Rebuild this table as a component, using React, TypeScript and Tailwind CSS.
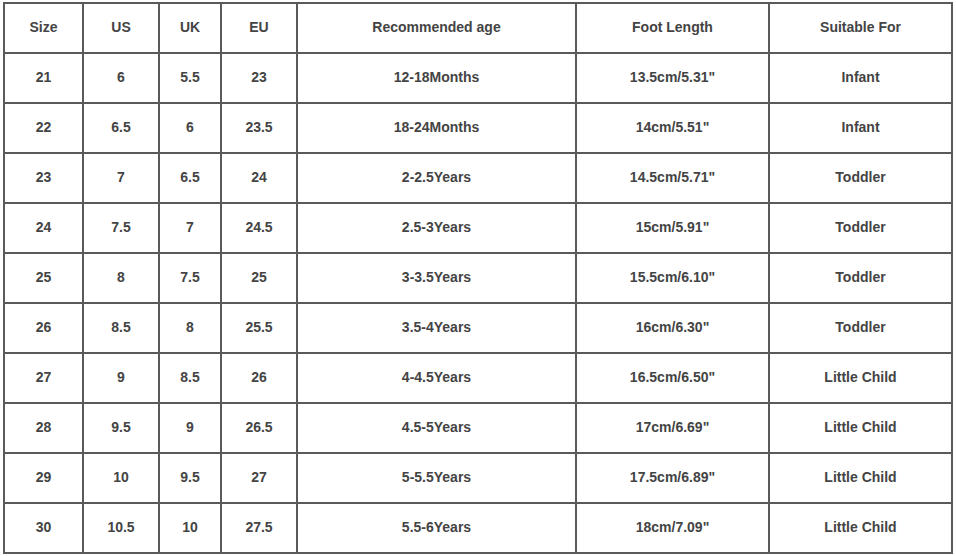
const headers = ['Size', 'US', 'UK', 'EU', 'Recommended age', 'Foot Length', 'Suitable For'];

const rows: string[][] = [
  ['21', '6', '5.5', '23', '12-18Months', '13.5cm/5.31"', 'Infant'],
  ['22', '6.5', '6', '23.5', '18-24Months', '14cm/5.51"', 'Infant'],
  ['23', '7', '6.5', '24', '2-2.5Years', '14.5cm/5.71"', 'Toddler'],
  ['24', '7.5', '7', '24.5', '2.5-3Years', '15cm/5.91"', 'Toddler'],
  ['25', '8', '7.5', '25', '3-3.5Years', '15.5cm/6.10"', 'Toddler'],
  ['26', '8.5', '8', '25.5', '3.5-4Years', '16cm/6.30"', 'Toddler'],
  ['27', '9', '8.5', '26', '4-4.5Years', '16.5cm/6.50"', 'Little Child'],
  ['28', '9.5', '9', '26.5', '4.5-5Years', '17cm/6.69"', 'Little Child'],
  ['29', '10', '9.5', '27', '5-5.5Years', '17.5cm/6.89"', 'Little Child'],
  ['30', '10.5', '10', '27.5', '5.5-6Years', '18cm/7.09"', 'Little Child'],
];

const widths = ['w-[79px]', 'w-[76px]', 'w-[62px]', 'w-[76px]', 'w-[279px]', 'w-[193px]', 'w-[183px]'];

export default function App() {
  return (
    <div className="w-[956px] h-[556px] bg-white pt-[2px] pl-[3px] font-['Liberation_Sans',Arial,sans-serif] text-[14px] font-bold text-[#444]">
      <table className="w-[948px] table-fixed border-collapse">
        <colgroup>
          {widths.map((w, i) => (
            <col key={i} className={w} />
          ))}
        </colgroup>
        <tbody>
          <tr className="h-[50px]">
            {headers.map((h) => (
              <td key={h} className="border-2 border-[#5a5a5a] pb-[2px] text-center align-middle">
                {h}
              </td>
            ))}
          </tr>
          {rows.map((r) => (
            <tr key={r[0]} className="h-[50px]">
              {r.map((c, i) => (
                <td key={i} className="border-2 border-[#5a5a5a] pb-[2px] text-center align-middle">
                  {c}
                </td>
              ))}
            </tr>
          ))}
        </tbody>
      </table>
    </div>
  );
}
